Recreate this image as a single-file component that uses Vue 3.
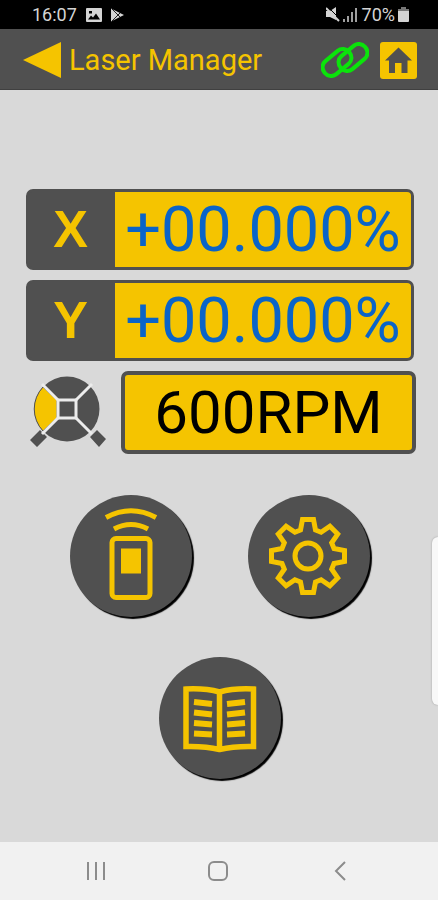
<template>
    <div class="screen">
        <!-- system status bar -->
        <div class="status-bar">
            <div class="status-group">
                <span>16:07</span>
                <svg width="16" height="14" viewBox="0 0 16 14">
                    <path fill="#d4d4d4" fill-rule="evenodd"
                        d="M1 0h14a1 1 0 0 1 1 1v12a1 1 0 0 1-1 1H1a1 1 0 0 1-1-1V1a1 1 0 0 1 1-1zM2 11.500h12L10 5.500 7 9.500 5 7.500zM3 3v2.500h3V3z" />
                </svg>
                <svg width="13" height="14" viewBox="0 0 13 14">
                    <path fill="#d4d4d4" d="M0 0.500 13 7 0 13.500z" />
                    <path stroke="#222" stroke-width="1" fill="none" d="M1 1l8 8M1 13l8-8" />
                </svg>
            </div>
            <div class="status-group right">
                <svg width="14" height="15" viewBox="0 0 14 15">
                    <path fill="#d4d4d4" d="M0 4h4l6-4v13l-6-3H0z" />
                    <path stroke="#000" stroke-width="1" d="M2 0l12 12" />
                    <path stroke="#d4d4d4" stroke-width="2" d="M0 1l13 13" />
                </svg>
                <svg width="14" height="15" viewBox="0 0 14 15">
                    <path stroke="#d4d4d4" stroke-width="1.500" d="M1 12v3M5 9v6M9 5v10M13 1v14" />
                </svg>
                <span class="battery-text">70%</span>
                <svg width="11" height="15" viewBox="0 0 11 15">
                    <path fill="#777" d="M3 0h5v2h3v3H0V2h3z" />
                    <path fill="#d4d4d4" d="M0 4h11v10a1 1 0 0 1-1 1H1a1 1 0 0 1-1-1z" />
                </svg>
            </div>
        </div>

        <header class="app-bar">
            <button class="icon-button" aria-label="Back">
                <svg width="38" height="36" viewBox="0 0 38 36">
                    <path fill="#f5c400" d="M0 18 38 0v36z" />
                </svg>
            </button>
            <h1>Laser Manager</h1>
            <button class="icon-button link-button" aria-label="Connection">
                <svg width="48" height="36" viewBox="0 0 48 36" fill="none" stroke="#0be30b" stroke-width="4">
                    <rect x="0" y="12" width="32" height="17" rx="8" transform="rotate(-40 16 20.500)" />
                    <rect x="16" y="7" width="32" height="17" rx="8" transform="rotate(-40 32 15.500)" />
                </svg>
            </button>
            <button class="icon-button" aria-label="Home">
                <svg width="37" height="37" viewBox="0 0 37 37">
                    <rect width="37" height="37" rx="3" fill="#f5c400" />
                    <path fill="#505050" d="M18.500 5.500 32 18.500h-4.500V31h-6V21h-6.500v10h-6V18.500H5z" />
                </svg>
            </button>
        </header>

        <main class="content">
            <div class="readings">
                <div v-for="axis in axes" :key="axis.name" class="axis">
                    <label class="axis-name" :for="'axis-' + axis.name">{{ axis.name }}</label>
                    <output class="axis-value" :id="'axis-' + axis.name">{{ axis.value }}</output>
                </div>
                <div class="speed-row">
                    <svg class="rotor" width="76" height="73" viewBox="0 0 76 73">
                        <g fill="#505050">
                            <circle cx="37" cy="33" r="32.500" />
                            <path d="M0 64 10 54l7 7-10 10zM60 61l7-7 9 9-7 8z" />
                        </g>
                        <path fill="#f5c400" stroke="#505050" d="M13 11 27 24v18L13 55a32 32 0 0 1 0-44z" />
                        <g fill="none" stroke="#ececec" stroke-width="3">
                            <rect x="28" y="24" width="18" height="18" />
                            <path d="M12 8 28 24M62 8 46 24M12 58 28 42M62 58 46 42" />
                        </g>
                    </svg>
                    <button class="speed">{{ speed }}RPM</button>
                </div>
            </div>

            <nav class="actions">
                <button class="round-button" aria-label="Remote control">
                    <svg viewBox="0 0 122 122" fill="none" stroke="#f5c400" stroke-width="5">
                        <path d="M36 22.500Q61 9 86 22.500M44 34Q61 25 78 34" />
                        <rect x="42" y="43.500" width="38" height="59" rx="4" />
                        <rect x="51" y="53.500" width="20" height="25" fill="#f5c400" stroke="none" />
                    </svg>
                </button>
                <button class="round-button" aria-label="Settings">
                    <svg viewBox="0 0 122 122" fill="none" stroke="#f5c400" stroke-width="5">
                        <polygon :points="gearPoints" />
                        <circle cx="60" cy="61" r="13" />
                    </svg>
                </button>
                <button class="round-button" aria-label="Manual">
                    <svg viewBox="0 0 122 122" fill="none" stroke="#f5c400" stroke-width="5.500">
                        <path d="M27 32Q46 31 60.500 35 75 31 94.500 32V89.500Q75 89 60.500 92.500 46 89 27 89.500zM60.500 35v57" />
                        <path stroke-width="6"
                            d="M35 45l18 2M35 55.500l18 2M35 66l18 1.500M35 76.500l18 1M68 47l18-2M68 57.500l18-2M68 67.500l18-1.500M68 77.500l18-1" />
                    </svg>
                </button>
            </nav>
            <div class="edge-handle"></div>
        </main>

        <!-- system navigation -->
        <nav class="system-nav">
            <button class="icon-button" aria-label="Recent apps">
                <svg width="24" height="24" viewBox="0 0 24 24" stroke="#8c8c8c" stroke-width="2">
                    <path d="M4 3v18M12 3v18M20 3v18" />
                </svg>
            </button>
            <button class="icon-button" aria-label="Home screen">
                <svg width="24" height="24" viewBox="0 0 24 24" fill="none" stroke="#8c8c8c" stroke-width="2">
                    <rect x="3" y="3" width="18" height="18" rx="5" />
                </svg>
            </button>
            <button class="icon-button" aria-label="Go back">
                <svg width="24" height="24" viewBox="0 0 24 24" fill="none" stroke="#8c8c8c" stroke-width="2">
                    <path d="M17 3 8 12l9 9" />
                </svg>
            </button>
        </nav>
    </div>
</template>

<script setup>
import { ref, computed } from 'vue'

const axes = ref([
    { name: 'X', value: '+00.000%' },
    { name: 'Y', value: '+00.000%' }
])
const speed = ref(600)

// one tooth of the gear, repeated eight times around the centre
const gearPoints = computed(() => {
    const tooth = [[-7.5, -26], [-5.5, -36.5], [5.5, -36.5], [7.5, -26]]
    const points = []
    for (let i = 0; i < 8; i++) {
        const a = (i * Math.PI) / 4
        tooth.forEach(([x, y]) => {
            const px = 60 + x * Math.cos(a) - y * Math.sin(a)
            const py = 61 + x * Math.sin(a) + y * Math.cos(a)
            points.push(`${px.toFixed(1)},${py.toFixed(1)}`)
        })
    }
    return points.join(' ')
})
</script>

<style>
body {
    background-color: #d9d9d9;
}
</style>

<style scoped>
.screen {
    display: flex;
    flex-direction: column;
    min-height: 100vh;
    font-family: Roboto, "Liberation Sans", sans-serif;
}

svg {
    display: block;
}

button {
    font-family: inherit;
    cursor: pointer;
}

.status-bar {
    display: flex;
    justify-content: space-between;
    align-items: center;
    height: 29px;
    padding: 0 29px 0 32px;
    background-color: #000;
    color: #d4d4d4;
    font-size: 18px;
    line-height: 30px;
}

.status-group {
    display: flex;
    align-items: center;
    gap: 9px;
}

.status-group.right {
    gap: 3px;
}

.battery-text {
    margin-left: 2px;
}

.app-bar {
    display: flex;
    align-items: center;
    box-sizing: border-box;
    height: 61px;
    padding: 2px 21px 0 23px;
    background-color: #505050;
    border-bottom: 1px solid #404040;
}

.app-bar h1 {
    flex: 1;
    margin: 0 0 0 8px;
    color: #f5c400;
    font-size: 29px;
    font-weight: 400;
    line-height: 36px;
}

.icon-button {
    padding: 0;
    border: none;
    background: none;
}

.link-button {
    margin-right: 11px;
}

.content {
    position: relative;
    flex: 1;
    padding: 99px 22px 40px 24px;
    background-color: #d9d9d9;
}

.readings {
    display: flex;
    flex-direction: column;
    gap: 10px;
}

.axis {
    display: flex;
    box-sizing: border-box;
    height: 81px;
    margin: 0 2px;
    border: 3px solid #505050;
    border-radius: 7px;
    background-color: #505050;
}

.axis-name {
    flex: none;
    box-sizing: border-box;
    width: 86px;
    padding-right: 3px;
    color: #f5c400;
    font-family: "Liberation Sans", Arial, sans-serif;
    font-size: 52px;
    font-weight: 700;
    line-height: 74px;
    text-align: center;
}

.axis-value {
    flex: 1;
    border-radius: 0 4px 4px 0;
    background-color: #f5c400;
    color: #0a64c8;
    font-size: 63px;
    line-height: 76px;
    text-align: center;
}

.speed-row {
    display: flex;
    align-items: center;
    gap: 15px;
    padding-left: 6px;
}

.rotor {
    flex: none;
}

.speed {
    flex: 1;
    height: 83px;
    padding: 0;
    border: 4px solid #505050;
    border-radius: 7px;
    background-color: #f5c400;
    color: #000;
    font-size: 60px;
    line-height: 75px;
}

.actions {
    display: flex;
    flex-wrap: wrap;
    justify-content: center;
    gap: 40px 56px;
    margin-top: 41px;
}

.round-button {
    width: 122px;
    height: 122px;
    padding: 0;
    border: none;
    border-radius: 50%;
    background-color: #505050;
    box-shadow: 2px 2px 1px #000;
}

.edge-handle {
    position: absolute;
    top: 447px;
    right: 0;
    width: 6px;
    height: 168px;
    border-radius: 6px 0 0 6px;
    background-color: #f8f8f8;
    box-shadow: 0 0 2px #999;
}

.system-nav {
    display: flex;
    justify-content: center;
    align-items: center;
    gap: 98px;
    height: 58px;
    padding-right: 2px;
    background-color: #f1f1f1;
}
</style>
